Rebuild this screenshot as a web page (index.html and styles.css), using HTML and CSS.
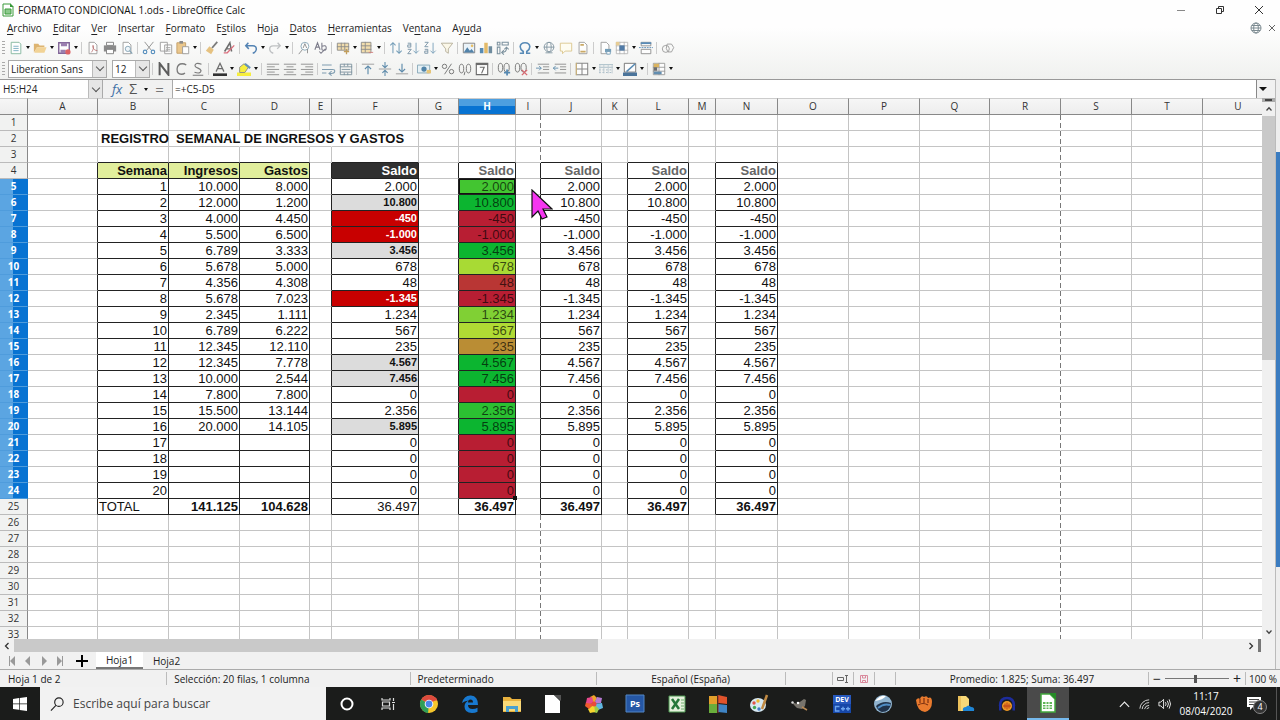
FILE: index.html
```html
<!DOCTYPE html>
<html lang="es">
<head>
<meta charset="utf-8">
<title>FORMATO CONDICIONAL 1.ods - LibreOffice Calc</title>
<link rel="stylesheet" href="styles.css">
</head>
<body>
<div class="chrome">
  <header class="titlebar">
    <svg class="doc-icon" viewBox="0 0 12 14"><path d="M1 1h7l3 3v9H1z" fill="#fff" stroke="#3a9a3a"/><path d="M8 0l4 4H8z" fill="#3a9a3a"/><path d="M3 6h6v5H3z" fill="#8cc98c" stroke="#3a9a3a"/></svg>
    <span class="title">FORMATO CONDICIONAL 1.ods - LibreOffice Calc</span>
    <div class="window-buttons">
      <button aria-label="Minimizar"><svg viewBox="0 0 10 10"><path d="M1 5.500h8" stroke="#888"/></svg></button>
      <button aria-label="Restaurar"><svg viewBox="0 0 10 10" fill="none" stroke="#333"><path d="M1.500 3.500h5v5h-5zM3.500 3V1.500h5v5H7"/></svg></button>
      <button aria-label="Cerrar"><svg viewBox="0 0 10 10"><path d="M1 1l8 8M9 1l-8 8" stroke="#333"/></svg></button>
    </div>
  </header>
  <nav class="menubar">
    <button><u>A</u>rchivo</button><button><u>E</u>ditar</button><button><u>V</u>er</button><button><u>I</u>nsertar</button><button><u>F</u>ormato</button><button>E<u>s</u>tilos</button><button>H<u>o</u>ja</button><button><u>D</u>atos</button><button><u>H</u>erramientas</button><button>Ve<u>n</u>tana</button><button>Ay<u>u</u>da</button>
    <div class="menu-end">
      <button aria-label="Actualizar"><svg viewBox="0 0 12 12" fill="none" stroke="#7d8c92"><circle cx="6" cy="6" r="5"/><ellipse cx="6" cy="6" rx="2.300" ry="5"/><path d="M1 6h10M2 3.500h8M2 8.500h8"/></svg></button>
      <button aria-label="Cerrar documento"><svg viewBox="0 0 12 12"><path d="M3 3l6 6M9 3l-6 6" stroke="#666"/></svg></button>
    </div>
  </nav>
  <div class="toolbar" id="standard-bar"></div>
  <div class="toolbar">
    <span class="grip"></span>
    <div class="combo font-name"><select aria-label="Nombre de la fuente"><option>Liberation Sans</option></select><span class="chevron"></span></div>
    <div class="combo font-size"><select aria-label="Tamaño"><option>12</option></select><span class="chevron"></span></div>
    <div class="tools" id="format-bar"></div>
  </div>
</div>
<div class="workspace">
  <main class="document">
    <div class="formula-bar">
      <div class="name-box"><input aria-label="Cuadro de nombre" value="H5:H24"><span class="chevron"></span></div>
      <div class="formula-tools">
        <button class="fx" aria-label="Asistente de funciones">fx</button>
        <button class="sigma" aria-label="Seleccionar función">Σ</button>
        <span class="caret"></span>
        <button class="equals" aria-label="Fórmula">=</button>
      </div>
      <input class="formula-input" aria-label="Línea de entrada" value="=+C5-D5">
      <button class="expand" aria-label="Expandir"><span class="caret big"></span></button>
    </div>
    <div class="sheet-area">
      <div class="sheet-view">
        <table class="sheet" id="sheet"></table>
        <svg class="pointer" viewBox="0 0 22 32"><path d="M1 1v27l6-6 4 8 5-2-4-8h9z" fill="#f536f0" stroke="#111" stroke-width="1.200"/></svg>
      </div>
      <div class="vscroll">
        <span class="split"></span>
        <button aria-label="Subir"><svg viewBox="0 0 8 8" fill="none" stroke="#444" stroke-width="1.300"><path d="M1.500 5.500L4 2.800l2.500 2.700"/></svg></button>
        <div class="vtrack"><div class="vthumb"></div></div>
        <button aria-label="Bajar"><svg viewBox="0 0 8 8" fill="none" stroke="#444" stroke-width="1.300"><path d="M1.500 2.500L4 5.200l2.500-2.700"/></svg></button>
      </div>
    </div>
    <div class="hscroll">
      <button aria-label="Izquierda"><svg viewBox="0 0 8 8" fill="none" stroke="#333" stroke-width="1.300"><path d="M5.500 1L2.500 4l3 3"/></svg></button>
      <div class="htrack"><div class="hthumb"></div></div>
      <button aria-label="Derecha"><svg viewBox="0 0 8 8" fill="none" stroke="#333" stroke-width="1.300"><path d="M2.500 1l3 3-3 3"/></svg></button>
      <span class="hsplit"></span>
    </div>
    <div class="tabs">
      <button class="nav" aria-label="Primera hoja"><svg viewBox="0 0 10 10" fill="#999"><path d="M2 0h1v10H2zM8 0v10L3 5z"/></svg></button>
      <button class="nav" aria-label="Hoja anterior"><svg viewBox="0 0 10 10" fill="#999"><path d="M7 0v10L2 5z"/></svg></button>
      <button class="nav" aria-label="Hoja siguiente"><svg viewBox="0 0 10 10" fill="#999"><path d="M3 0v10l5-5z"/></svg></button>
      <button class="nav" aria-label="Última hoja"><svg viewBox="0 0 10 10" fill="#999"><path d="M7 0h1v10H7zM2 0v10l5-5z"/></svg></button>
      <button class="add" aria-label="Añadir hoja"><svg viewBox="0 0 12 12"><path d="M6 0v12M0 6h12" stroke="#000" stroke-width="2"/></svg></button>
      <button class="tab active">Hoja1</button>
      <button class="tab">Hoja2</button>
    </div>
  </main>
  <div class="desktop-edge"><span class="edge-top"></span><span class="edge-mid"></span><span class="edge-end"></span></div>
</div>
<footer class="statusbar">
  <span class="st-sheet">Hoja 1 de 2</span>
  <span class="st-sel">Selección: 20 filas, 1 columna</span>
  <span class="st-style">Predeterminado</span>
  <span class="st-lang">Español (España)</span>
  <span class="st-gap"></span>
  <span class="st-mode"><svg viewBox="0 0 12 10" fill="none" stroke="#666"><path d="M.5 3.500h6v3h-6zM8 1.500h3M8 8.500h3M9.500 1.500v7"/></svg></span>
  <span class="st-mode"><svg viewBox="0 0 12 10" fill="none" stroke="#d9899c"><path d="M2.500 1.500h7v7h-7zM4.500 2v2h3V2M4.500 8V6.500h3V8"/></svg></span>
  <span class="st-sign"></span>
  <span class="st-sum">Promedio: 1.825; Suma: 36.497</span>
  <span class="st-zoom"><button aria-label="Reducir">−</button><input type="range" aria-label="Escala" min="0" max="100" value="48"><button aria-label="Ampliar">+</button></span>
  <span class="st-pct">100 %</span>
</footer>
<div class="taskbar">
  <button class="start" aria-label="Inicio"><svg viewBox="0 0 14 14" fill="#fff"><path d="M0 2l6-.9v5.400H0zM6.700 1L14 0v6.500H6.700zM0 7.200h6v5.500L0 11.900zM6.700 7.200H14V14l-7.300-1.100z"/></svg></button>
  <label class="search"><svg viewBox="0 0 16 16" fill="none" stroke="#222" stroke-width="1.200"><circle cx="9.500" cy="6" r="4.500"/><path d="M6.300 9.500L1 15"/></svg><input type="text" aria-label="Buscar" placeholder="Escribe aquí para buscar"></label>
  <div class="apps" id="apps"></div>
  <div class="tray">
    <svg viewBox="0 0 14 14" fill="none" stroke="#eee" stroke-width="1.200"><path d="M2 10l5-5 5 5"/></svg>
    <svg viewBox="0 0 14 14" fill="none" stroke="#ddd"><path d="M2 12A10 10 0 0 1 12 2.500M4.500 12.500A7.500 7.500 0 0 1 12 5.500M7 12.500a5 5 0 0 1 5-4M9.500 12.500a2.500 2.500 0 0 1 2.500-1.500"/></svg>
    <svg viewBox="0 0 14 14" fill="none" stroke="#eee"><path d="M1 5h2l3-3v10L3 9H1zM8 5q1.500 2 0 4M10 3.500q2.500 3.500 0 7M12 2q3 5 0 10"/></svg>
    <div class="clock"><span>11:17</span><span>08/04/2020</span></div>
    <button class="notices" aria-label="Notificaciones"><svg viewBox="0 0 16 16"><path d="M1 1h14v10H7l-3 3v-3H1z" fill="#fff"/><path d="M3 3.500h10M3 6h10M3 8.500h6" stroke="#444"/></svg><span class="badge">4</span></button>
  </div>
</div>
<script src="app.js"></script>
</body>
</html>
```

FILE: styles.css
```css
* { box-sizing: border-box; }
body {
  margin: 0; height: 100vh; display: flex; flex-direction: column; overflow: hidden;
  font-family: "Open Sans", "Noto Sans", sans-serif; font-size: 10px; line-height: 14px; color: #222; background: #f1f1f1;
}
button, input, select { font: inherit; color: inherit; border: 0; padding: 0; margin: 0; background: none; min-width: 0; border-radius: 0; outline: 0; }
svg { display: block; }
.chrome { flex: none; background: linear-gradient(#fefefe 35%, #f0f1ef); }
.titlebar { display: flex; align-items: center; height: 19px; padding-left: 2px; }
.doc-icon { width: 12px; height: 14px; margin-right: 4px; }
.title { color: #111; }
.window-buttons { margin-left: auto; display: flex; padding-right: 2px; }
.window-buttons button { width: 39px; display: flex; justify-content: center; }
.window-buttons svg { width: 10px; height: 10px; }
.menubar { display: flex; align-items: center; height: 18px; padding-left: 7px; gap: 11px; }
.menubar u { text-underline-offset: 2px; }
.menu-end { margin-left: auto; display: flex; gap: 2px; padding-right: 2px; }
.menu-end button:first-child { margin-right: 2px; }
.menu-end svg { width: 12px; height: 12px; }
.toolbar { display: flex; align-items: center; height: 21px; }
.grip { width: 3px; height: 14px; margin: 0 2px; background: repeating-linear-gradient(#aaa 0 1px, transparent 1px 3px); }
.tool { width: 17px; height: 18px; display: flex; align-items: center; justify-content: center; }
.tool svg { width: 14px; height: 14px; opacity: .85; }
.tools { display: flex; align-items: center; }
.sep { width: 5px; height: 12px; background: linear-gradient(#ccc, #ccc) center / 1px 100% no-repeat; }
.drop { width: 7px; display: flex; justify-content: center; }
.caret { border: 2px solid transparent; border-top: 3px solid #111; border-bottom: 0; width: 4px; height: 3px; }
.caret.big { border-width: 4px 4px 0; width: 8px; height: 4px; }
.combo, .name-box { display: flex; border: 1px solid #aaa; background: #fff; height: 18px; }
.combo select { appearance: none; flex: 1; padding-left: 2px; }
.font-name { width: 99px; margin-left: 1px; }
.font-size { width: 38px; margin-left: 5px; }
.chevron { width: 14px; flex: none; background: #e6e6e6; border-left: 1px solid #bbb; display: flex; align-items: center; justify-content: center; }
.chevron::after { content: ""; width: 5px; height: 5px; border: solid #555; border-width: 0 1px 1px 0; transform: rotate(45deg); margin-top: -3px; }
.workspace { flex: 1; min-height: 0; display: flex; }
.document { flex: 1; min-width: 0; display: flex; flex-direction: column; border-right: 1px solid #bbb; }
.desktop-edge { width: 4px; display: flex; flex-direction: column; }
.edge-top { flex: 73; background: #eee; }
.edge-mid { flex: 415; background: #3b7cc0; }
.edge-end { flex: 102; background: #eee; }
.formula-bar { display: flex; flex: none; height: 19px; border-top: 1px solid #999; background: #f1f1f1; }
.name-box { width: 103px; border-width: 0 1px 0 0; }
.name-box input { flex: 1; padding-left: 3px; }
.formula-tools { width: 69px; display: flex; align-items: center; gap: 7px; padding-left: 9px; }
.fx { font: italic 13px "Open Sans", sans-serif; color: #3b6ea5; }
.sigma { font-size: 14px; color: #555; }
.equals { font-size: 15px; color: #777; }
.formula-input { flex: 1; background: #fff; border-left: 1px solid #aaa; border-right: 1px solid #888; padding-left: 2px; }
.expand { width: 18px; display: flex; align-items: center; padding-left: 2px; }
.sheet-area { flex: 1; min-height: 0; display: flex; }
.sheet-view { flex: 1; overflow: hidden; position: relative; background: #fff; }
.sheet { border-collapse: separate; border-spacing: 0; table-layout: fixed; width: 100%; min-width: 1274px; font-family: "Liberation Sans", Arial, sans-serif; font-size: 13px; line-height: 15px; color: #111; }
.sheet th, .sheet td { padding: 0 1px; height: 16px; border: solid #c4c4c4; border-width: 0 1px 1px 0; white-space: nowrap; text-align: right; overflow: hidden; }
.sheet th { font: 10px/15px "Open Sans", sans-serif; text-align: center; background: linear-gradient(#f6f6f6, #ededed); border-color: #888; color: #333; }
.sheet thead th { border-top: 1px solid #ccc; height: 17px; }
.sheet thead th.picked { background: linear-gradient(#4d9fe0 45%, #0873d2 45%); color: #fff; font-weight: 700; }
.sheet tbody th { border-bottom-color: #bbb; background: #f1f2f1; }
.sheet tbody th.picked { background: linear-gradient(90deg, #5ba5e2 13px, #0873d2 13px); color: #fff; font-weight: 700; border-color: #0873d2; border-bottom-color: #4f9cdc; }
.sheet td.open { overflow: visible; text-align: left; padding-left: 3px; font-weight: 700; position: relative; }
.sheet td.box { border-color: #222; }
.sheet td.edge-r { border-right-color: #222; }
.sheet td.edge-b { border-bottom-color: #222; }
.sheet td.page { border-right-color: transparent; background: repeating-linear-gradient(#777 0 5px, transparent 5px 8px) right top / 1px 16px no-repeat border-box; }
.sheet td.covered { border-right-color: transparent; }
.sheet td.b { font-weight: 700; }
.sheet td.left { text-align: left; }
.sheet td.head { font-weight: 700; background: #e1ee9c; }
.sheet td.dark { font-weight: 700; background: #303030; color: #fff; }
.sheet td.soft { font-weight: 700; color: #666; }
.sheet td.good { font-weight: 700; font-size: 11px; background: #dcdcdc; }
.sheet td.bad { font-weight: 700; font-size: 11px; background: #c80000; color: #fff; }
.sheet td.scale { color: rgba(0, 0, 0, .68); }
.sheet td.current { box-shadow: inset 0 0 0 1px #111; }
.sheet td.last { position: relative; overflow: visible; }
.sheet td.last::after { content: ""; position: absolute; right: -2px; bottom: -2px; width: 4px; height: 4px; background: #111; }
.pointer { position: absolute; left: 531px; top: 91px; width: 22px; height: 32px; }
.vscroll { width: 13px; flex: none; display: flex; flex-direction: column; background: #f0f0f0; }
.vscroll button { height: 14px; display: flex; align-items: center; justify-content: center; }
.vscroll svg, .hscroll svg { width: 8px; height: 8px; }
.split { height: 4px; border: solid #aaa; border-width: 1px 3px; background: #444; }
.vtrack { flex: 1; }
.vthumb { height: 48%; background: #c9c9c9; }
.hscroll { display: flex; align-items: center; flex: none; height: 13px; padding-right: 14px; }
.hscroll button { width: 14px; height: 13px; display: flex; align-items: center; justify-content: center; }
.htrack { flex: 1; height: 13px; }
.hthumb { width: 47.5%; height: 13px; background: #c9c9c9; }
.hsplit { width: 3px; height: 13px; background: #777; }
.tabs { display: flex; align-items: center; flex: none; height: 17px; padding-left: 4px; }
.nav, .add { width: 16px; display: flex; justify-content: center; }
.nav svg { width: 10px; height: 10px; }
.add { width: 28px; }
.add svg { width: 12px; height: 12px; }
.tab { width: 47px; height: 17px; }
.tab.active { background: #fff; border-bottom: 2px solid #777; }
.statusbar { display: flex; flex: none; height: 18px; padding: 2px 0; border-top: 1px solid #aaa; white-space: nowrap; }
.statusbar > span { border-right: 1px solid #bbb; display: flex; align-items: center; }
.statusbar > span:last-child { border-right: 0; }
.st-sheet { flex: 158; padding-left: 8px; }
.st-sel { flex: 236; padding-left: 7px; }
.st-style { flex: 178; padding-left: 6px; }
.st-lang { flex: 188; justify-content: center; }
.st-gap { flex: 46; }
.st-mode { width: 21px; justify-content: center; }
.st-mode svg { width: 12px; height: 10px; }
.st-sign { width: 21px; }
.st-sum { flex: 252; justify-content: center; }
.st-zoom { width: 97px; gap: 4px; padding: 0 4px; font-size: 14px; }
.st-zoom input { appearance: none; flex: 1; height: 10px; background: linear-gradient(#777, #777) center / 100% 1px no-repeat; }
.st-zoom input::-webkit-slider-thumb { appearance: none; width: 3px; height: 8px; background: #555; }
.st-pct { width: 34px; padding-left: 3px; }
.taskbar { display: flex; flex: none; height: 33px; background: #1b1c1b; color: #fff; }
.start { width: 40px; display: flex; align-items: center; justify-content: center; }
.start svg { width: 14px; height: 14px; }
.search { width: 286px; display: flex; align-items: center; background: #f2f2f2; padding-left: 10px; gap: 8px; color: #333; font-size: 12px; }
.search svg { width: 15px; height: 16px; flex: none; }
.search input { flex: 1; }
.search input::placeholder { color: #444; opacity: 1; }
.apps { width: 58%; display: flex; }
.app { flex: 1; display: flex; align-items: center; justify-content: center; }
.app svg { width: 20px; height: 20px; }
.app.running { background: #4a4a4a; border-bottom: 2px solid #76b9ed; }
.tray { flex: 1; display: flex; align-items: center; justify-content: flex-end; gap: 7px; border-right: 1px solid #555; margin-right: 3px; }
.tray > svg { width: 13px; height: 14px; flex: none; }
.clock { display: flex; flex-direction: column; align-items: center; width: 56px; line-height: 15px; }
.notices { position: relative; width: 35px; height: 20px; padding-left: 5px; color: #fff; }
.notices svg { width: 16px; height: 16px; }
.badge { position: absolute; left: 12px; top: 6px; width: 14px; height: 14px; border-radius: 50%; background: #333; border: 1px solid #888; line-height: 12px; font-size: 9px; text-align: center; }
```

FILE: app.js
```js
const PAGE = '<path d="M3.500 1.500h6l3 3v10h-9z" fill="#fff" stroke="#888"/>';
const icons = {
  nuevo: '<path d="M2.500 1.500h9l2 2v11h-11z" fill="#fff" stroke="#6aa88a"/><path d="M5 6h6M5 8.500h6M5 11h6" stroke="#5b9bb5"/>',
  abrir: '<path d="M1 13V3h5l1.500 2H13v2H5z" fill="#d9a85a"/><path d="M4 7h11.500L13 13.500H1.500z" fill="#f1cd85"/>',
  guardar: '<path d="M2 2h12v12H2z" fill="#fff" stroke="#6b4a86" stroke-width="1.600"/><path d="M4.500 2h7v4h-7zM4 10h6v4H4z" fill="#8a6aa3"/><circle cx="12.500" cy="12.500" r="3" fill="#d8484c"/>',
  pdf: PAGE + '<path d="M6 13c3-3 3-8 2-8s0 6 5 6" fill="none" stroke="#b06060"/>',
  imprimir: '<path d="M4 1.500h8V5H4z" fill="#fff" stroke="#666"/><path d="M1 5h14v7H1z" fill="#777"/><path d="M4 9.500h8v5H4z" fill="#fff" stroke="#666"/>',
  vista: PAGE + '<circle cx="9" cy="9" r="3" fill="#eef5fa" stroke="#6f93a8"/><path d="M11 11l3 3.500" stroke="#6f93a8" stroke-width="1.500"/>',
  cortar: '<path d="M3 1l8 10M13 1L5 11" stroke="#777" fill="none"/><circle cx="3.500" cy="12.500" r="2" fill="none" stroke="#3d7fb5" stroke-width="1.300"/><circle cx="12.500" cy="12.500" r="2" fill="none" stroke="#3d7fb5" stroke-width="1.300"/>',
  copiar: '<path d="M1.500 1.500h8v10h-8zM6.500 4.500h8v10h-8z" fill="#fff" stroke="#888"/><path d="M8 7.500h5M8 9.500h5M8 11.500h5" stroke="#999"/>',
  pegar: '<path d="M1 2h10v12H1z" fill="#e8bf7a" stroke="#b98d4b"/><path d="M4 0h4v3H4z" fill="#777"/><path d="M7.500 6.500h7v8h-7z" fill="#fff" stroke="#888"/>',
  clonar: '<path d="M14 1L8 8" stroke="#666" stroke-width="2"/><path d="M5 6l5 4-3 5-6-4z" fill="#e3b96d"/>',
  limpiar: '<path d="M3 12L9 2l2 10M5 9h6" stroke="#555" fill="none" stroke-width="1.700"/><path d="M14 5l-8 8.500H2" stroke="#d8596a" stroke-width="1.500" fill="none"/>',
  deshacer: '<path d="M5 2L2 5.500 5.500 9M2 5.500h8q4.500 0 4 4.500-.5 3-4 4" fill="none" stroke="#376fa8" stroke-width="1.700"/>',
  rehacer: '<path d="M11 2l3 3.500L10.500 9M14 5.500H6Q1.500 5.500 2 10q.5 3 4 4" fill="none" stroke="#b5b8ba" stroke-width="1.500"/>',
  buscar: '<circle cx="9" cy="6" r="4.500" fill="#fff" stroke="#6f93a8"/><path d="M6 10l-4 5M7 8l2-5 2 5M12 9v5" stroke="#777" fill="none"/>',
  ortografia: '<path d="M1 10L4 2l3 8M2 7h4M9 2v8M9 6q5-2 5 2t-5 2M6 12l2 2 5-5" fill="none" stroke="#667" stroke-width="1.200"/>',
  fila: '<path d="M1.500 2.500h13v8h-13zM1 6.500h14M6 2v8M10 2v8" fill="#f0d8a0" stroke="#777"/><path d="M9 12h6M12 9v6" stroke="#b88f42" stroke-width="1.500"/>',
  columna: '<path d="M1.500 1.500h11v12h-11zM1 5.500h12M1 9.500h12M6 1v12" fill="#f0d8a0" stroke="#777"/><path d="M10 13h5" stroke="#c66"/>',
  ordenar: '<path d="M4.500 14V2M1.500 5l3-3 3 3M11.500 2v12M8.500 11l3 3 3-3" fill="none" stroke="#5f8fae" stroke-width="1.200"/>',
  ascendente: '<path d="M2 2.500h3.500V7H2V4.500h3.500M2 9.500h4L2 14.500h4" fill="none" stroke="#5f7f96"/><path d="M11.500 2v12M8.500 11l3 3 3-3" fill="none" stroke="#5f8fae"/>',
  descendente: '<path d="M2 1.500h4L2 6.500h4M2 9.500h3.500V14H2v-2.500h3.500" fill="none" stroke="#5f7f96"/><path d="M11.500 2v12M8.500 11l3 3 3-3" fill="none" stroke="#5f8fae"/>',
  filtro: '<path d="M1.500 2.500h13L9.500 9v5l-3-2V9z" fill="#fcf7e6" stroke="#a79f86"/>',
  imagen: '<path d="M1.500 2.500h13v11h-13z" fill="#e8f2fa" stroke="#666"/><path d="M2 13l4-6 3 4 2-2 3 4z" fill="#356f9d"/><circle cx="11.500" cy="5.500" r="1.500" fill="#e6b54c"/>',
  grafico: '<path d="M1 8h4v6H1z" fill="#3c78a8"/><path d="M6 2h4v12H6z" fill="#e0b050"/><path d="M11 6h4v8h-4z" fill="#57798f"/>',
  dinamica: '<path d="M1.500 1.500h3v3h-3zM7 1.500h7v3H7zM1.500 7h3v7.500h-3zM7 13q5 0 5-5M9.500 9.500L12 7l2.500 2.500M9 10.500L6.500 13 9 15.500" fill="none" stroke="#667f8e" stroke-width="1.200"/>',
  omega: '<path d="M2 14h4v-2Q2.500 9.500 2.500 6.500 3 2 8 2t5.500 4.500Q13.500 9.500 10 12v2h4" fill="none" stroke="#3d78ac" stroke-width="1.800"/>',
  enlace: '<circle cx="8" cy="7" r="5.500" fill="none" stroke="#6a8290"/><ellipse cx="8" cy="7" rx="2.500" ry="5.500" fill="none" stroke="#6a8290"/><path d="M2 7h12M4 13.500h8" stroke="#6a8290"/>',
  comentario: '<path d="M1.500 2.500h13v9H7l-3 3v-3H1.500z" fill="#fffdf0" stroke="#d6bd78"/>',
  encabezado: PAGE + '<path d="M5 4.500h4M5 12h6" stroke="#c29c4c" stroke-width="2"/>',
  area: PAGE + '<path d="M8 9h7v4H8z" fill="#5f8fae"/><path d="M10 12h4v3h-4z" fill="#fff" stroke="#5f8fae"/>',
  inmovilizar: '<path d="M1.500 1.500h13v13h-13zM1 5.500h14M1 10.500h14M5.500 1v14M10.500 1v14" fill="#fff" stroke="#aaa"/><path d="M5 5h6v6H5z" fill="#34669a"/><path d="M1 1h4v4H1z" fill="#e4c684"/>',
  dividir: '<path d="M2.500 1.500h11v4h-11zM2.500 9.500h11v5h-11z" fill="#fff" stroke="#777"/><path d="M2 2.500h12" stroke="#3d78ac" stroke-width="2"/><path d="M0 7.500h16" stroke="#3d78ac" stroke-dasharray="2 1"/>',
  dibujo: '<circle cx="5.500" cy="9" r="4" fill="none" stroke="#888"/><path d="M7 3.500h5l2.500 4-2.500 5H8l-2-4z" fill="none" stroke="#888"/>',
  negrita: '<path d="M3 15V1.500L13 14.500V1" fill="none" stroke="#444" stroke-width="2.300"/>',
  cursiva: '<path d="M14 3.500Q12 2 9.500 2 4 2 3.500 8q0 6 5 6 2.500 0 4-1.500" fill="none" stroke="#666" stroke-width="1.500"/>',
  subrayado: '<path d="M12 2.500Q4.500 0 4.500 4.500 5 6 8 7t3.500 3q-.5 4-7.500 1.800M2 15.200h12" fill="none" stroke="#666" stroke-width="1.300"/>',
  color: '<path d="M3.500 11L8 1.500 12.500 11M5 7.500h6" fill="none" stroke="#555" stroke-width="1.400"/><path d="M0 13h16v3H0z" fill="#111"/>',
  resaltar: '<path d="M0 12h16v4H0z" fill="#f7ee1e"/><path d="M3 12V6l5-4 5 4-4 6z" fill="#f7ee1e" stroke="#777"/><path d="M9 2l6 5" stroke="#4d82ac" stroke-width="2.500"/>',
  izquierda: '<path d="M1 2.500h14M1 5.500h9M1 8.500h14M1 11.500h9M1 14.500h14" stroke="#777"/>',
  centrar: '<path d="M1 2.500h14M4 5.500h8M1 8.500h14M4 11.500h8M1 14.500h14" stroke="#777"/>',
  derecha: '<path d="M1 2.500h14M6 5.500h9M1 8.500h14M6 11.500h9M1 14.500h14" stroke="#777"/>',
  ajustar: '<path d="M0 3.500h11M0 8.500h12q3 0 2.500 2.500t-5.500 2M11 10.500L8 13l3 2.500M0 12.500h5" fill="none" stroke="#6b8ea5" stroke-width="1.200"/>',
  combinar: '<path d="M1.500 2.500h13v12h-13zM1 5.500h14M1 11.500h14M6 2v3M10 2v3M6 12v3M10 12v3M3 8.500h10" fill="none" stroke="#667f8e"/>',
  arriba: '<path d="M1 2.500h14" stroke="#888"/><path d="M8 14V5M4.500 8L8 4.500 11.500 8" fill="none" stroke="#44799f" stroke-width="1.300"/>',
  medio: '<path d="M1 8h14" stroke="#888"/><path d="M8 0v6M5 3.500l3 3 3-3M8 16v-6M5 12.500l3-3 3 3" fill="none" stroke="#44799f" stroke-width="1.200"/>',
  abajo: '<path d="M1 13.500h14" stroke="#888"/><path d="M8 2v9M4.500 8L8 11.500 11.500 8" fill="none" stroke="#44799f" stroke-width="1.300"/>',
  moneda: '<path d="M.5 3.500h14v9H.5z" fill="#e3f0f6" stroke="#6b93a8"/><circle cx="8" cy="8" r="3" fill="#35719c"/><path d="M11 9h5v4h-5z" fill="#e3bd62"/>',
  porcentaje: '<circle cx="4" cy="5" r="2.500" fill="none" stroke="#555"/><circle cx="12" cy="11" r="2.500" fill="none" stroke="#555"/><path d="M12 2L4 14" stroke="#555"/>',
  numero: '<ellipse cx="4" cy="7.500" rx="2.500" ry="5" fill="none" stroke="#555"/><ellipse cx="12" cy="7.500" rx="2.500" ry="5" fill="none" stroke="#555"/><path d="M8 11l-1 4" stroke="#555"/>',
  fecha: '<path d="M1.500 1.500h13v13h-13z" fill="#fff" stroke="#555" stroke-width="1.300"/><path d="M1 2.500h14" stroke="#555" stroke-width="2"/><path d="M5.500 6h5L7.500 13" fill="none" stroke="#555" stroke-width="1.300"/>',
  mas: '<ellipse cx="4" cy="6.500" rx="2.500" ry="5" fill="none" stroke="#555"/><ellipse cx="11" cy="6.500" rx="3" ry="5" fill="none" stroke="#555"/><path d="M8 12h7M11.500 8.500v7" stroke="#3c78a8" stroke-width="2"/>',
  menos: '<ellipse cx="4" cy="6.500" rx="2.500" ry="5" fill="none" stroke="#555"/><ellipse cx="11" cy="6.500" rx="3" ry="5" fill="none" stroke="#555"/><path d="M9 9l6 6M15 9l-6 6" stroke="#d4525c" stroke-width="1.600"/>',
  sangria: '<path d="M2 2.500h13M8 5.500h7M8 8.500h7M2 12.500h13" stroke="#777"/><path d="M0 7h6M3.500 4.500L6 7 3.500 9.500" fill="none" stroke="#44799f"/>',
  quitarSangria: '<path d="M2 2.500h13M8 5.500h7M8 8.500h7M2 12.500h13" stroke="#777"/><path d="M6 7H0M3 4.500L.5 7 3 9.500" fill="none" stroke="#44799f"/>',
  bordes: '<path d="M1.500 1.500h13v13h-13zM8 1v14M1 8h14" fill="#fff" stroke="#777" stroke-width="1.200"/><path d="M1.500 1v14" stroke="#d8b15a"/>',
  estilo: '<path d="M0 3h16M0 6h16" stroke="#93aebc"/><path d="M0 9h16M0 12h16" stroke="#93aebc" stroke-dasharray="2 2"/><path d="M1 3v10M5.500 3v10M10.500 3v10M15 3v10" stroke="#b5c4cc"/>',
  linea: '<path d="M1.500 1.500h13v10h-13z" fill="#fff" stroke="#555"/><path d="M4 11L14 2" stroke="#3c78a8" stroke-width="1.700"/><path d="M0 12h16v4H0z" fill="#2e5f8c"/>',
  condicional: '<path d="M1.500 1.500h13v13h-13zM1 6h14M1 10.500h14M8 1v14" fill="#fff" stroke="#888"/><path d="M2 2h6v4H2z" fill="#d7a946"/><path d="M2 6h4v4H2z" fill="#555"/><path d="M2 11h9v3H2z" fill="#4a7da5"/>'
};
const bars = {
  'standard-bar': 'nuevo v abrir v guardar v | pdf imprimir vista | cortar copiar pegar v | clonar limpiar | deshacer v rehacer v | buscar ortografia | fila v columna v | ordenar ascendente descendente filtro | imagen grafico dinamica | omega v enlace comentario encabezado | area inmovilizar v dividir | dibujo',
  'format-bar': '| negrita cursiva subrayado | color v resaltar v | izquierda centrar derecha | ajustar combinar | arriba medio abajo | moneda v porcentaje numero fecha | mas menos | sangria quitarSangria | bordes v estilo v linea v | condicional v'
};
for (const [id, list] of Object.entries(bars)) {
  const html = list.split(' ').map(n =>
    n === 'v' ? '<span class="drop"><span class="caret"></span></span>' :
    n === '|' ? '<span class="sep"></span>' :
    `<button class="tool" aria-label="${n}"><svg viewBox="0 0 16 16">${icons[n]}</svg></button>`).join('');
  document.getElementById(id).innerHTML = (id === 'standard-bar' ? '<span class="grip"></span>' : '') + html;
}

const G = '#0cb530', R = '#b81e33';
const income = ['10.000','12.000','4.000','5.500','6.789','5.678','4.356','5.678','2.345','6.789','12.345','12.345','10.000','7.800','15.500','20.000','','','',''];
const costs = ['8.000','1.200','4.450','6.500','3.333','5.000','4.308','7.023','1.111','6.222','12.110','7.778','2.544','7.800','13.144','14.105','','','',''];
const balance = ['2.000','10.800','-450','-1.000','3.456','678','48','-1.345','1.234','567','235','4.567','7.456','0','2.356','5.895','0','0','0','0'];
const scale = ['#43c531',G,R,R,G,'#a8da34','#b93634',R,'#80d034','#b0da34','#ba8d34',G,G,R,'#2cc032',G,R,R,R,R];
const cols = 'ABCDEFGHIJKLMNOPQRSTU'.split('');
const widths = [28,70,71,71,70,22,87,40,57,25,61,26,61,27,62,71,71,70,71,71,71];
const boxed = 'BCDFHJLN';

function cell(c, r) {
  const i = r - 5, inTable = r >= 4 && r <= 25, cls = [];
  let text = '', bg = '';
  if (r === 2 && c === 'B') return '<td class="open">REGISTRO&nbsp; SEMANAL DE INGRESOS Y GASTOS</td>';
  if (r === 2 && 'CDE'.includes(c)) cls.push('covered');
  if (inTable && boxed.includes(c)) {
    cls.push('box');
    if (r === 4) {
      text = { B: 'Semana', C: 'Ingresos', D: 'Gastos' }[c] || 'Saldo';
      cls.push('BCD'.includes(c) ? 'head' : c === 'F' ? 'dark' : 'soft');
    } else if (r === 25) {
      text = { B: 'TOTAL', C: '141.125', D: '104.628' }[c] || '36.497';
      if (c === 'B') cls.push('left'); else if (c !== 'F') cls.push('b');
    } else {
      text = c === 'B' ? i + 1 : c === 'C' ? income[i] : c === 'D' ? costs[i] : balance[i];
      if (c === 'F') {
        const n = Number(balance[i].replace('.', ''));
        if (n < 0) cls.push('bad'); else if (n > 3000) cls.push('good');
      }
      if (c === 'H') {
        cls.push('scale'); bg = ` style="background:${scale[i]}"`;
        if (r === 5) cls.push('current');
        if (r === 24) cls.push('last');
      }
    }
  } else {
    if (inTable && 'AEGIKM'.includes(c)) cls.push('edge-r');
    else if (c === 'I' || c === 'R') cls.push('page');
    if (r === 3 && boxed.includes(c)) cls.push('edge-b');
  }
  return `<td class="${cls.join(' ')}"${bg}>${text}</td>`;
}
let html = '<colgroup>' + widths.map(w => `<col style="width:${w}px">`).join('') + '<col></colgroup><thead><tr><th></th>' +
  cols.map(c => `<th class="${c === 'H' ? 'picked' : ''}">${c}</th>`).join('') + '</tr></thead><tbody>';
for (let r = 1; r <= 33; r++) {
  html += `<tr><th class="${r > 4 && r < 25 ? 'picked' : ''}">${r}</th>${cols.map(c => cell(c, r)).join('')}</tr>`;
}
document.getElementById('sheet').innerHTML = html + '</tbody>';

const apps = {
  Cortana: '<circle cx="10" cy="10" r="5.500" fill="none" stroke="#fff" stroke-width="2"/>',
  'Vista de tareas': '<path d="M4 4v2h8V4M4 16v-2h8v2M4.500 8h7v4h-7zM15.500 4v3M15.500 10v6M14 8.500h3" fill="none" stroke="#ddd" stroke-width="1.200"/>',
  Chrome: '<circle cx="10" cy="10" r="9" fill="#f5c52c"/><path d="M10 10L2.200 5.500a9 9 0 0 1 15.600 0z" fill="#dd4b3e"/><path d="M10 10L2.200 5.500A9 9 0 0 0 9 19z" fill="#2f9e58"/><path d="M9 5.500h9" stroke="#dd4b3e" stroke-width="2"/><circle cx="10" cy="10" r="4.300" fill="#fff"/><circle cx="10" cy="10" r="3.400" fill="#4a86e8"/>',
  Edge: '<path d="M2 9Q4 1 11 1.500T18 11H8q0 4 4.500 4 3 0 5-1.300v4Q15 19 12 19 4.500 19 4.500 12.500q0-4 4-6Q4 7 2 9zM8 8.500h5q0-3-2.500-3T8 8.500z" fill="#1879d0"/>',
  Explorador: '<path d="M1 3h7l2 2h9v13H1z" fill="#e9b23e"/><path d="M1 7h18v10H1z" fill="#f9d978"/><path d="M4 18v-6h12v6h-3v-3H7v3z" fill="#4aa0cf"/>',
  LibreOffice: '<path d="M2 1h9l6 6v12H2z" fill="#fff"/><path d="M11 1h7v6z" fill="#555"/>',
  Fotos: '<g transform="translate(10 10)"><path d="M0 0l-4-7 4-2 3 3z" fill="#f0a52b"/><path d="M0 0l3-7 5 1-1 5z" fill="#b77bd4"/><path d="M0 0l8-1 1 5-5 2z" fill="#61b8e2"/><path d="M0 0l5 5-2 4-4-1z" fill="#9ccc4a"/><path d="M0 0l1 8-5 1-2-4z" fill="#f6d52e"/><path d="M0 0l-5 5-4-3 1-4z" fill="#ef5b2c"/><path d="M0 0l-8-1 1-5 5-1z" fill="#e8488c"/><circle r="2.500" fill="#e94a3c"/></g>',
  Photoshop: '<path d="M1 1h18v17H1z" fill="#2557a5" stroke="#5286c4"/><text x="10" y="13" text-anchor="middle" font-size="9" font-weight="700" fill="#fff">Ps</text>',
  Excel: '<path d="M2 2h16v16H2z" fill="#e5f1dd" stroke="#4c9650"/><path d="M5 5l7 10M12 5L5 15" stroke="#26783a" stroke-width="2.500"/><path d="M14 6h3M14 9h3M14 12h3M14 15h3" stroke="#6dad6d"/>',
  Media: '<path d="M1 2h8v8H1z" fill="#e3a02b"/><path d="M10 1l9 2v7l-9-1z" fill="#e0532c"/><path d="M1 10h8v9H1z" fill="#69ad3b"/><path d="M10 10l9 1v8l-9-1z" fill="#3f84c4"/><path d="M10 1v18" stroke="#8b3426"/>',
  Paint: '<ellipse cx="9" cy="11" rx="8" ry="7" fill="#d7e8f2"/><circle cx="5" cy="9" r="1.700" fill="#e05449"/><circle cx="9" cy="7" r="1.700" fill="#efb92d"/><circle cx="5.500" cy="13.500" r="1.700" fill="#46a654"/><circle cx="10" cy="15" r="1.700" fill="#3f7ac8"/><path d="M18 1l-5 14" stroke="#c08a44" stroke-width="2.500"/>',
  Gimp: '<path d="M2 8l5 2 7-5 2 1-1 6-3 3-5-1-3-3z" fill="#77736c"/><path d="M12 13l5 3" stroke="#b88a56" stroke-width="1.500"/><circle cx="8" cy="9" r="1.300" fill="#fff"/><circle cx="2.500" cy="8.500" r="1.200" fill="#ddd"/>',
  'Dev-C++': '<path d="M1 1h18v18H1z" fill="#2758bd"/><path d="M1 10h18v9H1z" fill="#1647a8"/><text x="10" y="8" text-anchor="middle" font-size="7" font-weight="700" fill="#fff">DEV</text><path d="M7.500 12.500h-4v4.500h4M9 14.800h4M11 12.800v4M14 14.800h4M16 12.800v4" fill="none" stroke="#6ca4ef" stroke-width="1.400"/>',
  Navegador: '<circle cx="10" cy="10" r="9" fill="#8fb3cf"/><path d="M2 7q5-6 11-5-3 4-11 5z" fill="#fff"/><path d="M3 12q7-6 15-3-1 9-9 9-4-1-6-6z" fill="#20324a"/><path d="M5 14q6-5 12-3" stroke="#4f8cc4" stroke-width="2" fill="none"/>',
  Puño: '<path d="M2 6q2-3 4-1 1-4 4-2 3-2 4 1 4-2 4 4 0 8-7 10-8-1-9-12z" fill="#ea7b2e"/><path d="M6 5v4M10 4v5M14 5v4M4 11q5-3 10 0" stroke="#7c3111" fill="none" stroke-width="1.200"/>',
  Documentos: '<path d="M3 2h8l3 3v12H3z" fill="#f9d978"/><path d="M3 2h3v15H3z" fill="#ecc15b"/><path d="M8 17q-1-4 3-4 2-3 5 0 4 0 3 4z" fill="#1f86d6"/>',
  Audacity: '<path d="M3 12Q3 4 10 4t7 8" fill="none" stroke="#1d2c9c" stroke-width="2.500"/><circle cx="10" cy="12" r="5" fill="#ef9a24"/><path d="M6 12h8M8 9.500v5M10 8.500v7M12 9.500v5" stroke="#b93a17"/><path d="M2 10.500h2.500v6H2zM15.500 10.500H18v6h-2.500z" fill="#1d2c9c"/>',
  Calc: '<path d="M3 1h9l5 5v13H3z" fill="#fff" stroke="#42a83c" stroke-width="1.500"/><path d="M11 0l7 7V0z" fill="#268a27"/><path d="M5 9h9v7H5z" fill="#5eb555"/><path d="M5 11.500h9M5 14h9M8 9v7M11 9v7" stroke="#fff"/>'
};
document.getElementById('apps').innerHTML = Object.entries(apps).map(([n, s]) =>
  `<button class="app${n === 'Calc' ? ' running' : ''}" aria-label="${n}"><svg viewBox="0 0 20 20">${s}</svg></button>`).join('');
```
